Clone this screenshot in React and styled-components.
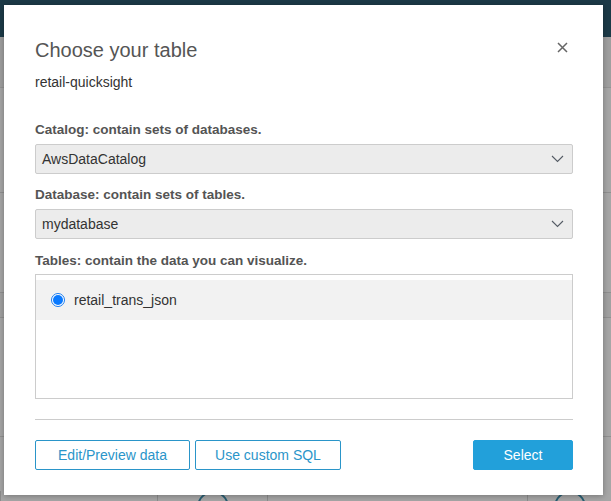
import styled, { createGlobalStyle } from "styled-components";

const GlobalStyle = createGlobalStyle`
  html, body {
    margin: 0;
    padding: 0;
    font-family: "Liberation Sans", Arial, sans-serif;
  }
  * { box-sizing: border-box; }
`;

const Page = styled.div`
  position: relative;
  width: 611px;
  height: 501px;
  overflow: hidden;
  background: #fff;
`;

const TopBar = styled.div`
  height: 37px;
  background: #2b596d;
`;

const SubBar = styled.div`
  height: 51px;
  background: #f4f4f4;
  border-bottom: 1px solid #e2e2e2;
`;

const Section = styled.div`
  height: ${(p) => p.h}px;
  border-bottom: 1px solid #dedede;
  background: ${(p) => p.bg || "#fff"};
`;

const CardRow = styled.div`
  display: flex;
  padding-top: 54px;
`;

const CardCell = styled.div`
  width: ${(p) => p.w}px;
  height: 20px;
  border-left: 1px solid #d8d8d8;
  display: flex;
  justify-content: center;
`;

const CardIcon = styled.span`
  width: 32px;
  height: 32px;
  border-radius: 50%;
  border: 2px solid #3d8fb0;
`;

const Overlay = styled.div`
  position: absolute;
  inset: 0;
  background: rgba(0, 0, 0, 0.35);
`;

const Modal = styled.div`
  position: absolute;
  left: 4px;
  top: 5px;
  width: 599px;
  height: 490px;
  background: #fff;
  box-shadow: 0 1px 6px rgba(0, 0, 0, 0.3);
  padding: 33px 30px 0 31px;
  display: flex;
  flex-direction: column;
`;

const Header = styled.div`
  display: flex;
  justify-content: space-between;
  align-items: flex-start;
`;

const Title = styled.h2`
  margin: 0;
  font-size: 20px;
  line-height: 24px;
  font-weight: 400;
  color: #555;
`;

const CloseButton = styled.button`
  width: 22px;
  height: 22px;
  margin-top: -2px;
  padding: 0;
  border: none;
  background: transparent;
  display: flex;
  align-items: center;
  justify-content: center;
  cursor: pointer;
`;

const Subtitle = styled.div`
  margin-top: 11px;
  font-size: 14px;
  line-height: 18px;
  color: #333;
`;

const Label = styled.div`
  margin-top: ${(p) => p.mt}px;
  font-size: 13.5px;
  line-height: 18px;
  font-weight: 700;
  color: #545454;
`;

const Select = styled.div`
  margin-top: 5px;
  height: 30px;
  border: 1px solid #ccc;
  border-radius: 2px;
  background: #ececec;
  display: flex;
  align-items: center;
  justify-content: space-between;
  padding: 0 8px 0 6px;
  font-size: 14px;
  color: #333;
`;

const TableList = styled.div`
  margin-top: 4px;
  height: 125px;
  border: 1px solid #ccc;
  padding-top: 5px;
`;

const TableRow = styled.label`
  height: 40px;
  display: flex;
  align-items: center;
  gap: 9px;
  padding-left: 15px;
  background: ${(p) => (p.selected ? "#f2f2f2" : "transparent")};
  font-size: 14px;
  color: #333;
`;

const Radio = styled.span`
  flex-shrink: 0;
  width: 14px;
  height: 14px;
  border-radius: 50%;
  border: 1px solid #1a7cf0;
  background: #fff;
  display: flex;
  align-items: center;
  justify-content: center;
  &::after {
    content: "";
    width: 10px;
    height: 10px;
    border-radius: 50%;
    background: #0a7aff;
  }
`;

const Divider = styled.hr`
  margin: 20px 0 0;
  border: none;
  border-top: 1px solid #ccc;
`;

const Footer = styled.div`
  margin-top: 20px;
  display: flex;
  gap: 5px;
`;

const Button = styled.button`
  height: 30px;
  padding: 0;
  border: 1px solid;
  border-radius: 2px;
  background: ${(p) => (p.primary ? "#22a0da" : "#fff")};
  border-color: ${(p) => (p.primary ? "#22a0da" : "#2a95c9")};
  color: ${(p) => (p.primary ? "#fff" : "#2a95c9")};
  font-family: inherit;
  font-size: 14px;
  margin-left: ${(p) => (p.push ? "auto" : "0")};
  width: ${(p) => p.w}px;
  cursor: pointer;
`;

const Chevron = () => (
  <svg width="13" height="8" viewBox="0 0 13 8">
    <polyline points="1,1 6.5,6.5 12,1" fill="none" stroke="#545b64" strokeWidth="1.1" />
  </svg>
);

const CloseIcon = () => (
  <svg width="11" height="11" viewBox="0 0 11 11">
    <path d="M1 1 L10 10 M10 1 L1 10" stroke="#666" strokeWidth="1.5" />
  </svg>
);

const App = () => {
  return (
    <Page>
      <GlobalStyle />
      <TopBar />
      <SubBar />
      <Section h={105} />
      <Section h={100} />
      <Section h={25} bg="#f7f7f7" />
      <Section h={119} />
      <CardRow>
        <CardCell w={157} />
        <CardCell w={110}>
          <CardIcon />
        </CardCell>
        <CardCell w={260} />
        <CardCell w={84}>
          <CardIcon />
        </CardCell>
      </CardRow>
      <Overlay />
      <Modal>
        <Header>
          <Title>Choose your table</Title>
          <CloseButton aria-label="Close">
            <CloseIcon />
          </CloseButton>
        </Header>
        <Subtitle>retail-quicksight</Subtitle>
        <Label mt={30}>Catalog: contain sets of databases.</Label>
        <Select>
          AwsDataCatalog
          <Chevron />
        </Select>
        <Label mt={12}>Database: contain sets of tables.</Label>
        <Select>
          mydatabase
          <Chevron />
        </Select>
        <Label mt={13}>Tables: contain the data you can visualize.</Label>
        <TableList>
          <TableRow selected>
            <Radio />
            retail_trans_json
          </TableRow>
        </TableList>
        <Divider />
        <Footer>
          <Button w={155}>Edit/Preview data</Button>
          <Button w={146}>Use custom SQL</Button>
          <Button primary push w={100}>
            Select
          </Button>
        </Footer>
      </Modal>
    </Page>
  );
};

export default App;
